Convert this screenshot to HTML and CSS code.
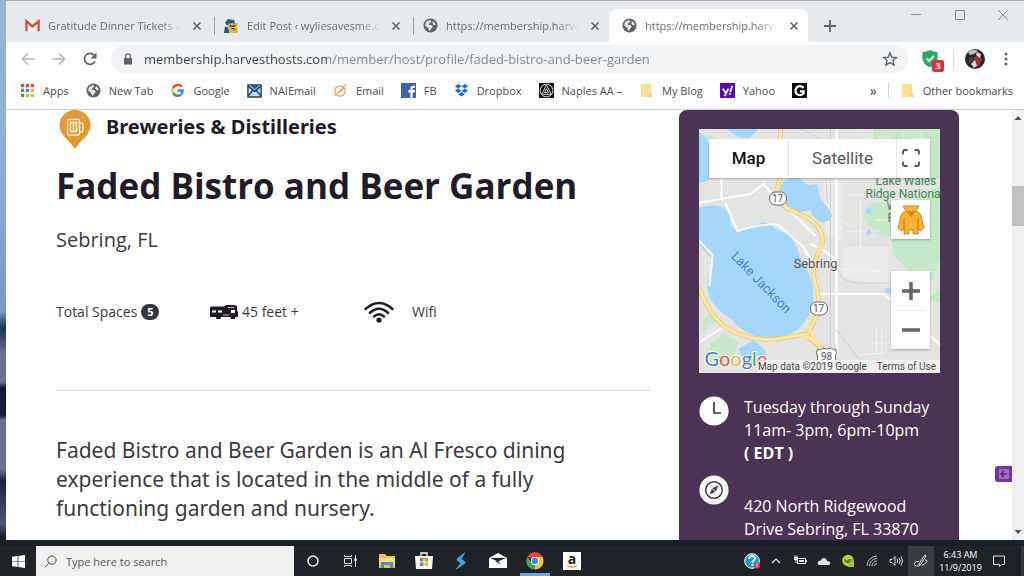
FILE: index.html
```html
<!DOCTYPE html>
<html lang="en">
<head>
<meta charset="utf-8">
<meta name="viewport" content="width=device-width, initial-scale=1">
<title>Faded Bistro and Beer Garden</title>
<link rel="stylesheet" href="styles.css">
</head>
<body>
<svg class="defs" aria-hidden="true">
  <symbol id="globe" viewBox="0 0 16 16"><circle cx="8" cy="8" r="7.500" fill="#5f6368"/><path d="M2.500 8.500Q2 5.500 4 3.800L7.500 2.200Q9.500 3 8.500 4.500L6.500 5.500 6 7.200 9 7.500 10.500 9.200 8.500 11.500 7.500 13.800Q6 13.500 6 11.500L4.500 9.500ZM10.500 3.200Q13.200 4.800 13.700 7.500L11.500 7.800 10 6Z" fill="#e8eaed"/></symbol>
  <symbol id="close" viewBox="0 0 10 10"><path d="M1.500 1.500l7 7m0-7l-7 7" stroke="#5f6368" stroke-width="1.600" fill="none"/></symbol>
  <symbol id="folder" viewBox="0 0 14 16"><path d="M1 2q0-1 1-1h9q1 0 1 1v9l1 1v2q0 1-1 1H2q-1 0-1-1Z" fill="#fbe18b"/><path d="M10 15v-3h3v3Z" fill="#f3d26c"/></symbol>
</svg>

<div class="desktop">
  <div class="window">
    <header class="tabs">
      <div class="tab-list">
        <div class="tab">
          <svg class="ico" viewBox="0 0 16 16"><path d="M1 3h14v11H1Z" fill="#f7f3f3"/><path d="M1.500 14V3.500L8 9l6.500-5.500V14" fill="none" stroke="#d54a40" stroke-width="2.400"/></svg>
          <a class="tab-title" href="#">Gratitude Dinner Tickets -</a>
          <button class="x" aria-label="Close tab"><svg viewBox="0 0 10 10"><use href="#close"/></svg></button>
        </div>
        <div class="tab divided">
          <svg class="ico" viewBox="0 0 16 16"><path d="M1 5L4 1l7 1 1 5-3 2-6-1Z" fill="#2862a5"/><path d="M1 9l4 1 1 6H0Z" fill="#1d5795"/><path d="M4 7q4-3 7-1l4-1-1 5 1 6H6L4 11Z" fill="#e5b441"/><path d="M6 8q3 2 6 0M8 11l4 1M5 4h4" stroke="#173d68" stroke-width="1.300" fill="none"/></svg>
          <a class="tab-title" href="#">Edit Post ‹ wyliesavesme.co</a>
          <button class="x" aria-label="Close tab"><svg viewBox="0 0 10 10"><use href="#close"/></svg></button>
        </div>
        <div class="tab divided">
          <svg class="ico" viewBox="0 0 16 16"><use href="#globe"/></svg>
          <a class="tab-title" href="#">https://membership.harve</a>
          <button class="x" aria-label="Close tab"><svg viewBox="0 0 10 10"><use href="#close"/></svg></button>
        </div>
        <div class="tab active">
          <svg class="ico" viewBox="0 0 16 16"><use href="#globe"/></svg>
          <a class="tab-title" href="#">https://membership.harve</a>
          <button class="x" aria-label="Close tab"><svg viewBox="0 0 10 10"><use href="#close"/></svg></button>
        </div>
        <button class="new-tab" aria-label="New tab"><svg viewBox="0 0 12 12"><path d="M6 0v12M0 6h12" stroke="#5f6368" stroke-width="1.800"/></svg></button>
      </div>
      <div class="win-controls">
        <button aria-label="Minimize"><svg viewBox="0 0 12 12"><path d="M1 5.500h10" stroke="#8a8c8f"/></svg></button>
        <button aria-label="Maximize"><svg viewBox="0 0 12 12"><path d="M1.500 1.500h9v9h-9Z" stroke="#8a8c8f" fill="none"/></svg></button>
        <button aria-label="Close window"><svg viewBox="0 0 12 12"><path d="M1 1l10 10m0-10L1 11" stroke="#8a8c8f"/></svg></button>
      </div>
    </header>

    <div class="toolbar">
      <button class="nav" aria-label="Back"><svg viewBox="0 0 14 14"><path d="M13.500 7H1.500M7 1.500L1.500 7 7 12.500" stroke="#b4b6b9" stroke-width="1.500" fill="none"/></svg></button>
      <button class="nav" aria-label="Forward"><svg viewBox="0 0 14 14"><path d="M.5 7h12M7 1.500L12.500 7 7 12.500" stroke="#b4b6b9" stroke-width="1.500" fill="none"/></svg></button>
      <button class="nav" aria-label="Reload"><svg viewBox="0 0 14 14"><path d="M12 9.200A5.500 5.500 0 1 1 11.200 3.300" stroke="#5f6368" stroke-width="1.700" fill="none"/><path d="M13.500.5v6h-6Z" fill="#5f6368"/></svg></button>
      <div class="omnibox">
        <svg class="lock" viewBox="0 0 10 12"><path d="M1 5h8v6.500H1Z" fill="#5f6368"/><path d="M2.700 5.500V3.200a2.300 2.300 0 0 1 4.600 0v2.300" stroke="#5f6368" stroke-width="1.300" fill="none"/></svg>
        <input class="url" type="text" aria-label="Address" value="membership.harvesthosts.com/member/host/profile/faded-bistro-and-beer-garden">
        <button class="star" aria-label="Bookmark this page"><svg viewBox="0 0 16 16"><path d="M8 1.800l1.800 4.300 4.700.4-3.600 3 1.200 4.600L8 11.600l-4.100 2.500 1.200-4.600-3.600-3 4.700-.4Z" stroke="#5f6368" stroke-width="1.300" fill="none"/></svg></button>
      </div>
      <button class="shield" aria-label="Protection"><svg viewBox="0 0 16 18"><path d="M8 0q4 2 7.500 2v7q-1 6-7.500 8.500Q1.500 15 .5 9V2Q4 2 8 0Z" fill="#2aaa5b"/><path d="M4.500 8.500L7 11l5-5" stroke="#fff" stroke-width="2" fill="none"/></svg><span class="count">3</span></button>
      <button class="avatar" aria-label="Profile"><svg viewBox="0 0 20 20"><circle cx="10" cy="10" r="10" fill="#2b2427"/><path d="M3 3Q8-1 13 2L9 5 5 6Z" fill="#b9c2c4"/><path d="M9 8l6-3 2 6-4 7-4-3Z" fill="#a32c42"/><path d="M12 3l4 2-1 4-4-3ZM6 15l4-4 2 6-3 2Z" fill="#ddd4d5"/><path d="M4 9l4-1 1 4-5 2Z" fill="#554447"/></svg></button>
      <button class="menu" aria-label="Menu"><svg viewBox="0 0 4 14"><g fill="#5f6368"><circle cx="2" cy="2" r="1.500"/><circle cx="2" cy="7" r="1.500"/><circle cx="2" cy="12" r="1.500"/></g></svg></button>
    </div>

    <nav class="bookmarks" aria-label="Bookmarks">
      <a href="#"><svg viewBox="0 0 16 16"><g fill="#e0473c"><path d="M1 1h3.500v3.500H1ZM6.300 1h3.500v3.500H6.300ZM11.500 1H15v3.500h-3.500Z"/></g><path d="M1 6.200h3.500v3.500H1ZM1 11.500h3.500V15H1Z" fill="#3f9e57"/><path d="M6.300 6.200h3.500v3.500H6.300Z" fill="#4285e8"/><path d="M11.500 6.200H15v3.500h-3.500ZM6.300 11.500h3.500V15H6.300ZM11.500 11.500H15V15h-3.500Z" fill="#eeb23c"/></svg>Apps</a>
      <a href="#"><svg viewBox="0 0 16 16"><use href="#globe"/></svg>New Tab</a>
      <a href="#"><svg viewBox="0 0 16 16"><g fill="none" stroke-width="2.600"><path d="M12.500 4A5.500 5.500 0 0 0 3.300 5.200" stroke="#e84335"/><path d="M3.300 5.200a5.700 5.700 0 0 0 0 5.600" stroke="#f6b90c"/><path d="M3.300 10.800a5.500 5.500 0 0 0 8.200 1.700" stroke="#34a353"/><path d="M11.500 12.500A5.500 5.500 0 0 0 13.500 8H8" stroke="#4285f4"/></g></svg>Google</a>
      <a href="#"><svg viewBox="0 0 16 16"><path d="M1 2h14v13H1Z" fill="#c4dff0" stroke="#1f4263" stroke-width="1.500"/><path d="M1 3l7 6 7-6M1 14l5-6m9 6l-5-6" stroke="#1f4263" stroke-width="1.600" fill="none"/><path d="M3 2h10L8 7Z" fill="#28597e"/></svg>NAIEmail</a>
      <a href="#"><svg viewBox="0 0 16 16"><circle cx="7.500" cy="8.500" r="5.500" fill="none" stroke="#e9a052" stroke-width="1.400"/><path d="M2 14L14 1M5 11l7-5" stroke="#e9a052" stroke-width="1.200"/></svg>Email</a>
      <a href="#"><svg viewBox="0 0 16 16"><path d="M0 0h16v16H0Z" fill="#4263aa"/><path d="M10 16V10h-2V7.500h2V6q0-3 3-3h2v2.400h-1.400q-1.200 0-1.200 1.100v1H15l-.4 2.500h-2.200v6Z" fill="#fff"/></svg>FB</a>
      <a href="#"><svg viewBox="0 0 16 16"><path d="M4.500 1L8 3.400 4.500 5.800 1 3.400ZM11.500 1L15 3.400l-3.500 2.400L8 3.400ZM4.500 5.800L8 8.200l-3.500 2.400L1 8.200ZM11.500 5.800L15 8.200l-3.500 2.400L8 8.200ZM8 9.600l3.500 2.400L8 14.400 4.500 12Z" fill="#1769e6"/></svg>Dropbox</a>
      <a href="#"><svg viewBox="0 0 16 16"><path d="M0 0h16v16H0Z" fill="#111"/><circle cx="8" cy="8" r="6.800" fill="none" stroke="#ddd"/><path d="M8 2L3 12h10ZM8 6l-2 4h4Z" fill="none" stroke="#ddd"/></svg>Naples AA –</a>
      <a href="#"><svg viewBox="0 0 14 16"><use href="#folder"/></svg>My Blog</a>
      <a href="#"><svg viewBox="0 0 16 16"><path d="M0 0h16v16H0Z" fill="#5a08bc"/><path d="M3 6l3 4.500M9 6l-4 8" stroke="#fff" stroke-width="2"/><path d="M13 3l-2 6.500" stroke="#fff" stroke-width="2"/><circle cx="10.500" cy="11.500" r="1.200" fill="#fff"/></svg>Yahoo</a>
      <a href="#" aria-label="G"><svg viewBox="0 0 16 16"><path d="M0 0h16v16H0Z" fill="#0b0b0b"/><path d="M12.300 5.300A4.800 4.800 0 1 0 12.300 11V8.800H8.500" fill="none" stroke="#fff" stroke-width="2.400"/></svg></a>
      <button class="more" aria-label="More bookmarks">»</button>
      <a class="other" href="#"><svg viewBox="0 0 14 16"><use href="#folder"/></svg>Other bookmarks</a>
    </nav>

    <div class="viewport">
      <div class="page">
        <main class="host">
          <div class="category">
            <svg viewBox="0 0 32 40"><path d="M16 0a15.500 15.500 0 0 1 15.500 15.500C31.500 25 21 31 16 39 11 31 .5 25 .5 15.500A15.500 15.500 0 0 1 16 0Z" fill="#e39a32"/><path d="M8.500 11q0-1.500 1.500-1.500H19q1.500 0 1.500 1.500v12.500q0 1.500-1.500 1.500h-9q-1.500 0-1.500-1.500ZM20.500 13H22q2 0 2 2v5q0 2-2 2h-1.500M11.500 12.500h6v9h-6ZM14.500 12.500v9" fill="none" stroke="#fff1d7" stroke-width="1.400"/></svg>
            <h2>Breweries &amp; Distilleries</h2>
          </div>
          <h1>Faded Bistro and Beer Garden</h1>
          <p class="city">Sebring, FL</p>
          <ul class="facts">
            <li>Total Spaces <span class="badge">5</span></li>
            <li><svg class="rv" viewBox="0 0 28 14"><path d="M0 3q0-1.500 1.500-1.500H14L16 0h9l2 1v4l1 2v5h-2.500a2.500 2.500 0 0 1-5 0H11a2.500 2.500 0 0 1-5 0H0Z" fill="#211b29"/><path d="M2 5.500h4v2H2ZM8 5.500h4v2H8ZM21 5h4v3h-4Z" fill="#fff"/><path d="M13 10h6M18 2.500h6" stroke="#fff" stroke-width=".7"/></svg>45 feet +</li>
            <li><svg class="wifi" viewBox="0 0 30 22"><g fill="none" stroke="#211b29" stroke-width="2.400" stroke-linecap="round"><path d="M1.500 8Q15-4 28.500 8M5.800 12Q15 3.500 24.200 12M10 15.500Q15 11 20 15.500"/></g><circle cx="15" cy="19" r="2.600" fill="#211b29"/></svg>Wifi</li>
          </ul>
          <p class="about">Faded Bistro and Beer Garden is an Al Fresco dining experience that is located in the middle of a fully functioning garden and nursery.</p>
        </main>

        <aside class="card">
          <div class="map">
            <svg class="map-art" viewBox="0 0 242 244" preserveAspectRatio="xMidYMid slice">
              <path d="M0 0h242v244H0Z" fill="#e4e4e3"/>
              <path d="M144 118l45 0 0 40-45-10ZM125 52h18v60l-16-8Z" fill="#ebebea"/>
              <g fill="#c4e8c9">
                <path d="M174 0h68v48l-12 4-18-14-14 2-6-18-16-8ZM170 76l14-3 16 8 42-25v70l-8 26-16-4-22-20-4-20-16-4-12-16ZM12 215l14-11 14 9-4 15-24 6ZM226 170l16-10v14ZM5 190l10-8 2 10-14 14ZM6 6l14 3-2 10-10-4Z"/>
              </g>
              <path d="M178 8h8v8M205 2v22M214 10h13M196 18h18M183 34h12M176 91h16M170 102h10M190 5v18M222 3v20" stroke="#e4e4e3" stroke-width="2" fill="none"/>
              <g fill="#a5d6fb">
                <path d="M0 3q8 4 10 12l10 22Q18 52 0 54ZM29 0h30q-4 7-10 9-12 0-20-9ZM82 58q4-10 17-10l10 8 10-1 2 13 12 16q2 9-9 9-10-2-12-12l-15 3-17-7ZM40 220l15-9 12 10-2 13q-18 6-25-14Z"/>
                <path d="M0 79Q22 72 31 85q0 12 6 16 14-2 27-8 8 1 16 9 12 2 14 8 3 5 8 18 9 18 12 27 5 28-15 46-16 10-34 8-19-3-32-19Q10 177 9 158q0-12 6-25L0 114Z"/>
                <circle cx="170" cy="82" r="3"/><path d="M168 103l3-3 2 5-5 2ZM187 159h7v5h-7Z"/>
              </g>
              <g fill="none" stroke="#fff" stroke-width="2">
                <path d="M23 44v25M0 74l22-4 30-5 13-10 12 14 22 20 18 18M138 0v227M27 74l12 28q26-8 41-6l12 11 13 11 8 14M0 111l14 15-3 31M0 214l26-17M120 165h65l8 7M112 115l13 6 10 8-2 9M228 204l14 12"/>
                <path d="M160 5v36M148 14h16M152 30h28M162 72v48M150 66h18M148 102h18M138 140l45 3M178 200v26M183 200v26M172 214h24M158 226l30-2M142 90l14 12" stroke-width="1" stroke="#f3f3f2"/>
              </g>
              <path d="M101 0q25 7 25 25l3 50M140 142q4 12 20 12h40M138 201l22 28M132 0v232" fill="none" stroke="#cfd0d0"/>
              <path d="M82 0v46l-4 18 10 15 21 10q16 10 15 24l-7 18q-4 12 0 24 5 17 3 28l-10 20-2 7M0 158q10 26 25 39 24 16 54 13l28-5 20 18" fill="none" stroke="#e8c978" stroke-width="4.500"/>
              <path d="M82 0v46l-4 18 10 15 21 10q16 10 15 24l-7 18q-4 12 0 24 5 17 3 28l-10 20-2 7M0 158q10 26 25 39 24 16 54 13l28-5 20 18M110 197l7 14-14-5" fill="none" stroke="#fde79b" stroke-width="3"/>
              <g class="route">
                <rect x="71" y="63" width="17" height="13" rx="6"/><text x="79" y="73">17</text>
                <rect x="112" y="173" width="17" height="13" rx="6"/><text x="120" y="183">17</text>
                <path d="M119 220q4 2 5-1 4 2 9 0 2 3 4 1 2 4 0 7 1 7-4 8h-10q-5-2-4-8-2-3 0-7Z"/><text x="128" y="231">98</text>
              </g>
              <g class="park"><text x="177" y="56">Lake Wales</text><text x="167" y="69">Ridge Nationa</text><text x="188" y="81">W</text><text x="189" y="93">R</text></g>
              <text class="town" x="95" y="139">Sebring</text>
              <text class="lake" transform="translate(32 128) rotate(46)">Lake Jackson</text>
              <text class="logo" x="6" y="237"><tspan fill="#4779ce">G</tspan><tspan fill="#d8564b">o</tspan><tspan fill="#e4b33a">o</tspan><tspan fill="#4779ce">g</tspan><tspan fill="#4ba263">l</tspan><tspan fill="#d8564b">e</tspan></text>
            </svg>
            <div class="map-top">
              <button class="kind on">Map</button>
              <button class="kind">Satellite</button>
              <button class="full" aria-label="Full screen"><svg viewBox="0 0 18 18"><path d="M1 5.500V3q0-2 2-2h2.500M12.500 1H15q2 0 2 2v2.500M17 12.500V15q0 2-2 2h-2.500M5.500 17H3q-2 0-2-2v-2.500" fill="none" stroke="#555" stroke-width="1.800"/></svg></button>
            </div>
            <div class="map-side">
              <button class="pegman" aria-label="Street View"><svg viewBox="0 0 28 30"><path d="M6 1h16l-3 5q4 1 5 5l3 12-4 3-2-3v6h-5v-4h-4v4H7v-6l-2 3-4-3L4 11q1-4 5-5Z" fill="#fbb22c" stroke="#a77b32" stroke-width=".8"/><path d="M9 6h10l-5 6Z" fill="#d78124"/><path d="M7 13v10M21 13v10" stroke="#b77b25"/></svg></button>
              <div class="zoom">
                <button aria-label="Zoom in"><svg viewBox="0 0 18 18"><path d="M9 0v18M0 9h18" stroke="#666" stroke-width="3.500"/></svg></button>
                <button aria-label="Zoom out"><svg viewBox="0 0 18 18"><path d="M0 9h18" stroke="#666" stroke-width="3.500"/></svg></button>
              </div>
            </div>
            <div class="map-credit"><span>Map data ©2019 Google</span><a href="#">Terms of Use</a></div>
          </div>
          <div class="info hours">
            <svg viewBox="0 0 30 30"><circle cx="15" cy="15" r="14.600" fill="#fff"/><path d="M15 6v11h7" fill="none" stroke="#4b3355" stroke-width="1.700"/></svg>
            <p>Tuesday through Sunday 11am- 3pm, 6pm-10pm <strong>( EDT )</strong></p>
          </div>
          <div class="info place">
            <svg viewBox="0 0 30 30"><circle cx="15" cy="15" r="14.600" fill="#fff"/><circle cx="15" cy="15" r="8.300" fill="none" stroke="#453a4b" stroke-width="1.500"/><path d="M19.500 10.500l-2.800 6-3.300-3.200ZM10.500 19.500l2.500-5.700 3.200 3.200Z" fill="#453a4b"/></svg>
            <address>420 North Ridgewood Drive Sebring, FL 33870</address>
          </div>
        </aside>
        <button class="side-widget" aria-label="Open panel"><svg viewBox="0 0 17 16"><path d="M3 0h14v16H3q-3 0-3-3V3q0-3 3-3Z" fill="#71369b"/><path d="M4 3h10v10H4Z" fill="#a969c9"/><path d="M12 8H6m3-3L6 8l3 3" fill="none" stroke="#602789" stroke-width="1.600"/></svg></button>
      </div>
      <div class="scroll" aria-hidden="true">
        <svg viewBox="0 0 12 16"><path d="M2.500 10L6 6l3.500 4Z" fill="#505050"/></svg>
        <div class="track"><div class="thumb"></div></div>
        <svg viewBox="0 0 12 16"><path d="M2.500 6L6 10l3.500-4Z" fill="#505050"/></svg>
      </div>
    </div>
  </div>
</div>

<footer class="taskbar">
  <button class="start" aria-label="Start"><svg viewBox="0 0 14 14"><path d="M0 2l6-.9v5.500H0ZM6.800 1L14 0v6.600H6.800ZM0 7.400h6v5.500L0 12ZM6.800 7.400H14V14l-7.200-1Z" fill="#fff"/></svg></button>
  <label class="search"><svg viewBox="0 0 14 14"><circle cx="8.500" cy="5.500" r="4.500" fill="none" stroke="#444"/><path d="M5.200 8.800L.8 13.200" stroke="#444"/></svg><input type="text" placeholder="Type here to search" aria-label="Type here to search"></label>
  <div class="apps">
    <button aria-label="Cortana"><svg viewBox="0 0 18 18"><circle cx="9" cy="9" r="5" fill="none" stroke="#eee" stroke-width="1.600"/></svg></button>
    <button aria-label="Task view"><svg viewBox="0 0 18 18"><path d="M3.500 6.500h7v5h-7ZM3.500 3v1.500h7V3M3.500 15v-1.500h7V15M14.500 3v12" fill="none" stroke="#ddd"/><path d="M13.500 6h2v3h-2Z" fill="#fff"/></svg></button>
    <button aria-label="File Explorer"><svg viewBox="0 0 18 18"><path d="M1 2h6l2 2h8v12H1Z" fill="#efc14c"/><path d="M1 6h16v7H1Z" fill="#fadd80"/><path d="M3 10h12v6h-3v-3H6v3H3Z" fill="#4a92cb"/></svg></button>
    <button aria-label="Store"><svg viewBox="0 0 18 18"><path d="M6 5V1h6v4" fill="none" stroke="#fff" stroke-width="1.300"/><path d="M0 4h18l-1 13H1Z" fill="#fff"/><path d="M5 6h3.500v3.500H5Z" fill="#e35a3d"/><path d="M9.500 6H13v3.500H9.500Z" fill="#7cb342"/><path d="M5 10.500h3.500V14H5Z" fill="#3499d5"/><path d="M9.500 10.500H13V14H9.500Z" fill="#efbd34"/></svg></button>
    <button aria-label="Stylus app"><svg viewBox="0 0 18 18"><path d="M12.500 1L5.500 6.500q-1 1 0 2L9 11l-4.500 6 8-5.500q1-1 0-2L9 7Z" fill="#38a6e6" stroke="#38a6e6" stroke-width="1"/></svg></button>
    <button aria-label="Mail"><svg viewBox="0 0 18 18"><path d="M0 6l9-5 9 5v10H0Z" fill="#fff"/><path d="M1 6h16l-8 3.500Z" fill="#222"/><path d="M9 9l3 3.500L6 9Z" fill="#222"/></svg></button>
    <button class="running" aria-label="Chrome"><svg viewBox="0 0 18 18"><path d="M9 9L1.600 4.500A8.500 8.500 0 0 1 16.500 5H9Z" fill="#e34a3b"/><path d="M9 9V5h7.500A8.500 8.500 0 0 1 8.500 17.500Z" fill="#f4c431"/><path d="M9 9l-.5 8.500A8.500 8.500 0 0 1 1.600 4.500L6 11Z" fill="#39a557"/><circle cx="9" cy="9" r="4.100" fill="#fff"/><circle cx="9" cy="9" r="3.200" fill="#4285e5"/></svg></button>
    <button aria-label="Amazon"><svg viewBox="0 0 18 18"><path d="M0 0h18v18H0Z" fill="#fff"/><text class="amz" x="9" y="12">a</text><path d="M4 13.500q5 3 10 0" fill="none" stroke="#e69b31" stroke-width="1.300"/></svg></button>
  </div>
  <div class="tray">
    <button aria-label="Help"><svg viewBox="0 0 16 16"><circle cx="8" cy="8" r="7.300" fill="#189acb" stroke="#fff"/><path d="M5.200 6q0-3 3-3 2.800 0 2.800 2.500 0 1.500-2.500 3V10M8.500 11v2" fill="none" stroke="#fff" stroke-width="1.800"/><circle cx="13" cy="12.500" r="3" fill="#e43b43"/><path d="M13 10.700v2.200m0 .8v.7" stroke="#fff"/></svg></button>
    <button aria-label="Show hidden icons"><svg viewBox="0 0 16 16"><path d="M4 10l4-4 4 4" stroke="#ddd" stroke-width="1.200" fill="none"/></svg></button>
    <button aria-label="Battery"><svg viewBox="0 0 16 16"><path d="M5.500 5.500h8v5h-8Z" fill="none" stroke="#eee"/><path d="M7 7h5v2H7ZM13.500 7H15v2h-1.500ZM2 4h4v3H2ZM2.500 2.500h1V4h-1ZM4.500 2.500h1V4h-1ZM3.500 7h1v3h-1Z" fill="#eee"/></svg></button>
    <button aria-label="OneDrive"><svg viewBox="0 0 16 16"><path d="M3.500 12Q1 11.500 2 9q.5-1.500 2.500-1.200Q6 4 9.500 5.500 11 6.500 11 8q3 0 3.300 2 0 2-2 2Z" fill="#e6e6e6"/></svg></button>
    <button aria-label="Network monitor"><svg viewBox="0 0 16 16"><circle cx="8" cy="7.500" r="5.700" fill="#b3d739"/><path d="M8 8h6v6H8Z" fill="#9fc934"/><path d="M5 6v3l2-2v3l2-4v4M11 6v3" stroke="#41601d" fill="none"/></svg></button>
    <button aria-label="Wi-Fi"><svg viewBox="0 0 16 16"><path d="M3 13A10 10 0 0 1 13 3M5.500 13A7.500 7.500 0 0 1 13 5.500M8 13a5 5 0 0 1 5-5M10.500 13a2.500 2.500 0 0 1 2.500-2.500" stroke="#bbb" fill="none"/></svg></button>
    <button aria-label="Volume"><svg viewBox="0 0 16 16"><path d="M2 6.500h2l3-3v9l-3-3H2ZM9 6q1.500 2 0 4M11 5q2.500 3 0 6M13 3.500q3 4.500 0 9" stroke="#ddd" fill="none"/></svg></button>
    <button class="ink" aria-label="Ink workspace"><svg viewBox="0 0 16 16"><path d="M6 11L11 3q2-2 2 0l-5 8-2 1ZM6 8.500q-4-1-4.500 2T5 13q2 0 3-2M9 11.500q1 1 2 0l3-3q0-2-2-1.500" stroke="#ddd" fill="none"/></svg></button>
    <div class="clock"><time>6:43 AM</time><time>11/9/2019</time></div>
    <button aria-label="Notifications"><svg viewBox="0 0 16 16"><path d="M2.500 3h11v8.500h-3l-2 2v-2h-6Z" stroke="#ddd" fill="none"/></svg></button>
  </div>
</footer>
</body>
</html>
```

FILE: styles.css
```css
* { box-sizing: border-box; }

body {
  margin: 0;
  height: 100vh;
  display: flex;
  flex-direction: column;
  overflow: hidden;
  font-family: "Open Sans", sans-serif;
  color: #3b3b40;
}

h1, h2, p, ul { margin: 0; padding: 0; }
ul { list-style: none; }
a { color: inherit; text-decoration: none; }
svg { display: block; flex: none; }
button {
  display: flex;
  align-items: center;
  justify-content: center;
  padding: 0;
  border: 0;
  background: none;
  font: inherit;
  color: inherit;
}
input { font: inherit; border: 0; padding: 0; outline: 0; background: none; min-width: 0; }
.defs { position: absolute; width: 0; height: 0; }

.desktop {
  flex: 1;
  min-height: 0;
  display: flex;
  padding: 0 0 6px 6px;
  background: linear-gradient(#9db2d4 0, #8fabd8 30%, #7d98c9 57%, #24324b 60%, #68748c 65%, #68748c 70%, #131d2e 71%, #131d2e 76%, #69748c 77%, #69748c 86%, #17243a 88%, #4c5870 96%, #1c2530 98%, #141d28);
}
.window {
  flex: 1;
  min-width: 0;
  display: flex;
  flex-direction: column;
  border-top: 1px solid #a9abae;
  background: #fff;
}

/* Tab strip */
.tabs { display: flex; justify-content: space-between; height: 41px; background: #e7eaed; }
.tab-list { display: flex; align-items: flex-end; padding-left: 6px; }
.tab {
  display: flex;
  align-items: center;
  width: 199px;
  height: 33px;
  padding: 0 9px 0 13px;
  gap: 8px;
  font-size: 11px;
  color: #6b6e72;
}
.tab.divided { background: linear-gradient(#9c9fa3, #9c9fa3) 3px 50% / 1px 18px no-repeat; }
.tab.active { background: #fff; border-radius: 8px 8px 0 0; }
.ico { width: 15px; height: 15px; }
.tab-title {
  flex: 1;
  overflow: hidden;
  white-space: nowrap;
  -webkit-mask-image: linear-gradient(90deg, #000 82%, transparent 98%);
  mask-image: linear-gradient(90deg, #000 82%, transparent 98%);
}
.x svg { width: 10px; height: 10px; }
.new-tab { width: 44px; height: 33px; }
.new-tab svg { width: 12px; height: 12px; }
.win-controls { display: flex; align-items: flex-start; }
.win-controls button { width: 44px; height: 28px; }
.win-controls button:last-child { width: 42px; }
.win-controls svg { width: 12px; height: 12px; }

/* Toolbar */
.toolbar { display: flex; align-items: center; height: 34px; padding: 0 6px; }
.nav { width: 31px; height: 28px; }
.nav svg { width: 14px; height: 14px; }
.omnibox {
  flex: 1;
  display: flex;
  align-items: center;
  height: 28px;
  margin-left: 6px;
  padding: 0 10px 0 12px;
  gap: 11px;
  border-radius: 14px;
  background: #f1f3f4;
}
.lock { width: 10px; height: 12px; }
.url {
  flex: 1;
  font-size: 13px;
  background: linear-gradient(90deg, #3c4043 183px, #80868b 183px);
  -webkit-background-clip: text;
  background-clip: text;
  color: transparent;
}
.star svg { width: 16px; height: 16px; }
.shield { position: relative; width: 16px; height: 18px; margin: 0 15px 0 14px; }
.shield svg { width: 16px; height: 18px; }
.count {
  position: absolute;
  left: 10px;
  top: 10px;
  width: 12px;
  border-radius: 2px;
  background: #dc2f45;
  color: #fff;
  font-size: 9px;
  font-weight: 700;
  line-height: 12px;
}
.avatar { padding-left: 11px; border-left: 1px solid #d5d7da; }
.avatar svg { width: 20px; height: 20px; }
.menu { width: 24px; margin-left: 9px; }
.menu svg { width: 4px; height: 14px; }

/* Bookmarks */
.bookmarks {
  display: flex;
  align-items: center;
  gap: 17px;
  height: 33px;
  padding: 0 11px 4px 14px;
  font-size: 11px;
  white-space: nowrap;
  color: #4a4d51;
}
.bookmarks a { display: flex; align-items: center; gap: 8px; }
.bookmarks svg { width: 15px; height: 15px; }
.more { margin-left: auto; margin-right: -6px; font-size: 14px; }
.bookmarks .other { padding-left: 11px; border-left: 1px solid #d5d7da; }

/* Page */
.viewport { flex: 1; min-height: 0; display: flex; border-top: 1px solid #cfcfcf; }
.page {
  position: relative;
  flex: 1;
  min-width: 0;
  display: flex;
  align-items: flex-start;
  gap: 28px;
  padding: 0 53px 0 50px;
  overflow: hidden;
}
.host { flex: 1; min-width: 0; }
.category { display: flex; gap: 15px; padding-left: 3px; }
.category svg { width: 32px; height: 40px; }
.category h2 { font-family: "Noto Sans", sans-serif; font-size: 20px; line-height: 34px; color: #211b29; }
h1 { margin-top: 11px; font-size: 35px; line-height: 50px; color: #211b29; }
.city { margin-top: 13px; font-size: 20px; line-height: 32px; }
.facts { display: flex; padding: 40px 0 62px; font-size: 14px; line-height: 32px; border-bottom: 1px solid #dcdcdc; }
.facts li { display: flex; align-items: center; gap: 4px; width: 154px; }
.badge {
  width: 18px;
  border-radius: 8px;
  background: #33373d;
  color: #fff;
  font-size: 11px;
  font-weight: 700;
  line-height: 16px;
  text-align: center;
}
.rv { width: 28px; height: 14px; }
.facts .wifi { width: 30px; height: 22px; margin-right: 14px; }
.about { max-width: 560px; padding-top: 45px; font-family: "Noto Sans", sans-serif; font-size: 21px; line-height: 29px; }

/* Sidebar card */
.card { width: 280px; height: 600px; padding: 19px 19px 19px 20px; border-radius: 8px; background: #4b3355; color: #fff; }
.map { position: relative; height: 244px; overflow: hidden; font-family: Roboto, sans-serif; }
.map-art { width: 100%; height: 100%; }
.route rect, .route path { fill: #fff; stroke: #666; }
.route text { font-size: 10px; text-anchor: middle; fill: #555; }
.park { font-size: 12px; fill: #438a51; }
.town { font-size: 13px; fill: #5a5a5a; }
.lake { font-size: 13px; fill: #4d86c4; }
.logo { font-family: Lato, sans-serif; font-size: 20px; stroke: #fff; stroke-width: 2px; paint-order: stroke; }
.map-top {
  position: absolute;
  top: 10px;
  left: 10px;
  right: 10px;
  display: flex;
  height: 39px;
  background: #fff;
  box-shadow: 0 1px 2px #0004;
}
.map-top button { padding-bottom: 1px; border-left: 1px solid #e6e6e6; }
.kind { width: 108px; font-size: 17px; color: #565656; }
.map-top .on { width: 79px; border: 0; font-weight: 500; color: #111; }
.map-top .full { flex: 1; padding-right: 5px; }
.full svg { width: 18px; height: 18px; }
.map-side { position: absolute; top: 71px; right: 10px; width: 39px; display: grid; gap: 32px; }
.pegman, .zoom { background: #fff; box-shadow: 0 1px 2px #0004; }
.pegman { height: 39px; }
.pegman svg { width: 28px; height: 30px; }
.zoom { padding: 0 5px; }
.zoom button { width: 100%; height: 39px; }
.zoom button + button { border-top: 1px solid #e6e6e6; }
.zoom svg { width: 18px; height: 18px; }
.map-credit {
  position: absolute;
  right: 0;
  bottom: 0;
  display: flex;
  gap: 10px;
  padding-right: 4px;
  background: #f2f2f2cc;
  color: #4a4a4a;
  font-size: 10px;
  line-height: 13px;
}
.info { display: flex; align-items: flex-start; gap: 15px; font-size: 16px; line-height: 23px; }
.info svg { width: 30px; height: 30px; }
.info strong { display: block; }
.info address { font-style: normal; padding-top: 20px; }
.hours { padding-top: 23px; }
.place { padding-top: 10px; }
.side-widget { position: absolute; right: 0; bottom: 58px; }
.side-widget svg { width: 17px; height: 16px; }

.scroll { width: 12px; display: flex; flex-direction: column; background: #f0f0f0; }
.scroll svg { width: 12px; height: 16px; }
.track { flex: 1; padding-top: 60px; }
.thumb { height: 40px; background: #c1c1c1; }

/* Taskbar */
.taskbar { display: flex; height: 30px; background: #1f2226; color: #fff; }
.start { width: 36px; }
.start svg { width: 13px; height: 13px; }
.search { display: flex; align-items: center; gap: 9px; width: 258px; padding-left: 8px; background: #f1f1f1; }
.search svg { width: 13px; height: 13px; }
.search input { flex: 1; font-size: 11px; }
.search input::placeholder { color: #555; opacity: 1; }
.apps { display: flex; }
.apps button { width: 37px; }
.apps svg { width: 18px; height: 18px; }
.running { background: linear-gradient(#6aa5dc, #6aa5dc) 50% 100% / 30px 3px no-repeat; }
.amz { font: 700 14px "Open Sans", sans-serif; text-anchor: middle; fill: #222; }
.tray { display: flex; margin-left: auto; padding-right: 10px; border-right: 3px solid #33373c; }
.tray button { width: 24px; }
.tray svg { width: 16px; height: 16px; }
.tray .ink { width: 26px; background: #383b40; }
.clock { display: flex; flex-direction: column; justify-content: center; width: 53px; font-size: 9px; line-height: 13px; text-align: center; }
```
